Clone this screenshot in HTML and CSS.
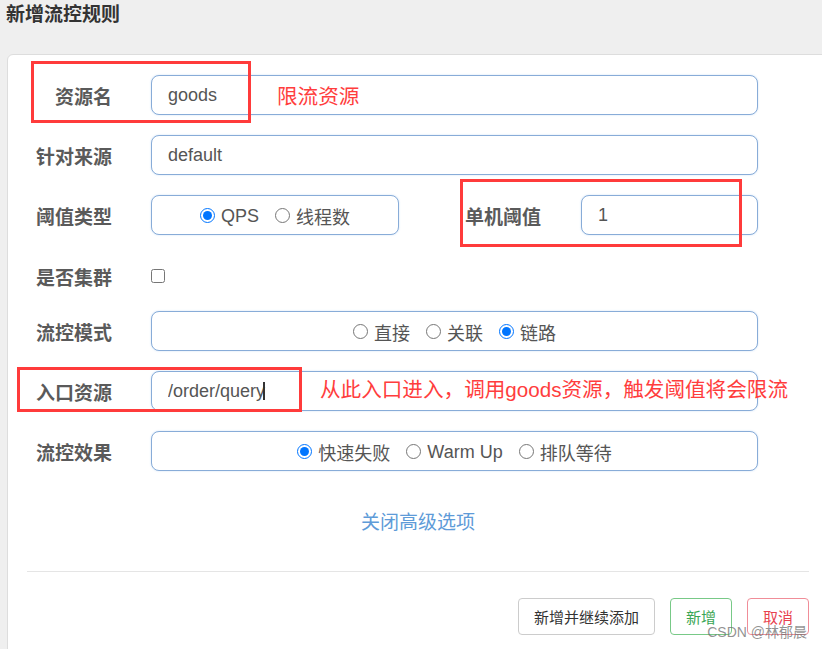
FILE: index.html
```html
<!DOCTYPE html>
<html lang="zh-CN">

<head>
    <meta charset="UTF-8">
    <meta name="viewport" content="width=device-width, initial-scale=1.0">
    <title>新增流控规则</title>
    <link rel="stylesheet" href="styles.css">
</head>

<body>
    <div class="page">
        <h1 class="title">新增流控规则</h1>
        <div class="panel">
            <form class="rule-form" name="f">
                <div class="row">
                    <label class="label" for="resource">资源名</label>
                    <input class="field" type="text" id="resource" value="goods">
                </div>
                <div class="row">
                    <label class="label" for="limitApp">针对来源</label>
                    <input class="field" type="text" id="limitApp" value="default">
                </div>
                <div class="row">
                    <span class="label">阈值类型</span>
                    <div class="field radios short">
                        <label class="opt"><input type="radio" name="grade" checked>QPS</label>
                        <label class="opt"><input type="radio" name="grade">线程数</label>
                    </div>
                    <label class="label inline" for="count">单机阈值</label>
                    <input class="field" type="text" id="count" value="1">
                </div>
                <div class="row check">
                    <label class="label" for="cluster">是否集群</label>
                    <input type="checkbox" id="cluster">
                </div>
                <div class="row">
                    <span class="label">流控模式</span>
                    <div class="field radios">
                        <label class="opt"><input type="radio" name="strategy">直接</label>
                        <label class="opt"><input type="radio" name="strategy">关联</label>
                        <label class="opt"><input type="radio" name="strategy" checked>链路</label>
                    </div>
                </div>
                <div class="row">
                    <label class="label" for="refResource">入口资源</label>
                    <input class="field" type="text" id="refResource" value="/order/query">
                </div>
                <div class="row">
                    <span class="label">流控效果</span>
                    <div class="field radios">
                        <label class="opt"><input type="radio" name="behavior" checked>快速失败</label>
                        <label class="opt"><input type="radio" name="behavior">Warm Up</label>
                        <label class="opt"><input type="radio" name="behavior">排队等待</label>
                    </div>
                </div>
                <div class="more"><a href="#">关闭高级选项</a></div>
                <div class="form-btn">
                    <button type="button" class="btn">新增并继续添加</button>
                    <button type="button" class="btn btn-ok">新增</button>
                    <button type="button" class="btn btn-cancel">取消</button>
                </div>
            </form>

            <!-- annotations drawn over the form -->
            <div class="mark mark-1"></div>
            <div class="mark mark-2"></div>
            <div class="mark mark-3"></div>
            <span class="note note-1">限流资源</span>
            <span class="note note-2">从此入口进入，调用goods资源，触发阈值将会限流</span>
            <span class="caret"></span>
        </div>
        <span class="watermark">CSDN @林郁晨</span>
    </div>
</body>

</html>
```

FILE: styles.css
```css
* {
    box-sizing: border-box;
}

body {
    margin: 0;
    background: #efefef;
    font-family: "Liberation Sans", "Noto Sans CJK SC", sans-serif;
    color: #555;
}

.page {
    position: relative;
    width: 822px;
    height: 649px;
    overflow: hidden;
}

.title {
    margin: 0;
    padding-left: 6px;
    height: 30px;
    line-height: 30px;
    font-size: 19px;
    font-weight: bold;
    color: #333;
}

.panel {
    position: relative;
    margin: 24px 0 0 7px;
    width: 823px;
    height: 620px;
    padding: 20px 20px 0 0;
    background: #fff;
    border: 1px solid #ddd;
    border-radius: 6px 6px 0 0;
}

.row {
    display: flex;
    align-items: center;
    height: 40px;
    margin-bottom: 20px;
    padding-right: 51px;
}

.row.check {
    height: 36px;
    padding-top: 6px;
}

.label {
    flex: none;
    width: 104px;
    margin-right: 39px;
    text-align: right;
    font-size: 19px;
    font-weight: bold;
    color: #5a5a5a;
}

.label.inline {
    width: auto;
    margin: 0 40px 0 66px;
}

.field {
    flex: 1;
    min-width: 0;
    height: 40px;
    padding: 0 16px;
    border: 1px solid #88acd8;
    border-radius: 8px;
    box-shadow: 0 0 2px rgba(102, 160, 225, 0.35);
    font-family: inherit;
    font-size: 18px;
    color: #555;
    background: #fff;
    outline: none;
}

.field.short {
    flex: none;
    width: 248px;
}

.radios {
    display: flex;
    justify-content: center;
    align-items: center;
    padding: 2px 0 0;
}

.opt {
    display: inline-flex;
    align-items: center;
    margin: 0 8px;
    font-size: 18px;
    color: #555;
}

.opt input {
    width: 15px;
    height: 15px;
    margin: 0 6px 2px 0;
}

.check input {
    width: 14px;
    height: 14px;
    margin: 0;
}

.more {
    margin: 0 0 16px 19px;
    height: 64px;
    line-height: 64px;
    text-align: center;
    font-size: 19px;
}

.more a {
    color: #5e9bd8;
    text-decoration: none;
}

.form-btn {
    display: flex;
    justify-content: flex-end;
    gap: 15px;
    margin-left: 19px;
    padding-top: 26px;
    border-top: 1px solid #e5e5e5;
}

.btn {
    height: 37px;
    padding: 0 15px;
    border: 1px solid #ccc;
    border-radius: 4px;
    background: #fff;
    font-family: inherit;
    font-size: 15px;
    color: #333;
}

.btn-ok {
    border-color: #78c987;
    color: #3aa655;
}

.btn-cancel {
    border-color: #f08d98;
    color: #e8414f;
}

.mark {
    position: absolute;
    border: 3px solid #ff3b3b;
}

.mark-1 {
    left: 23px;
    top: 6px;
    width: 220px;
    height: 62px;
}

.mark-2 {
    left: 452px;
    top: 124px;
    width: 282px;
    height: 68px;
}

.mark-3 {
    left: 9px;
    top: 312px;
    width: 285px;
    height: 45px;
}

.note {
    position: absolute;
    font-size: 20.6px;
    line-height: 24px;
    color: #ff3d3d;
    white-space: nowrap;
}

.note-1 {
    left: 269px;
    top: 30px;
}

.note-2 {
    left: 312px;
    top: 323px;
}

.caret {
    position: absolute;
    left: 255px;
    top: 327px;
    width: 2px;
    height: 18px;
    background: #333;
}

.watermark {
    position: absolute;
    right: 15px;
    bottom: 8px;
    font-size: 14px;
    color: rgba(110, 110, 110, 0.75);
}
```
